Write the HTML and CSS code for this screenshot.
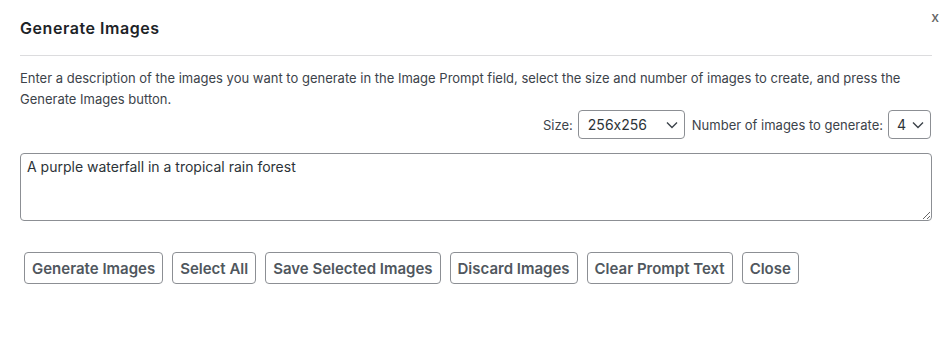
FILE: index.html
```html
<!DOCTYPE html>
<html lang="en">
<head>
  <meta charset="UTF-8" />
  <meta name="viewport" content="width=device-width, initial-scale=1.0" />
  <title>Generate Images</title>
  <link rel="stylesheet" href="styles.css">
</head>
<body>
  <div class="modal">
    <button class="close-x" type="button">x</button>
    <div class="modal-header">
      <h1>Generate Images</h1>
    </div>

    <p class="intro">Enter a description of the images you want to generate in the Image Prompt field, select the size and number of images to create, and press the Generate Images button.</p>

    <div class="options">
      <label for="size">Size:</label>
      <div class="select-wrap size-select">
        <select id="size">
          <option>256x256</option>
          <option>512x512</option>
          <option>1024x1024</option>
        </select>
        <svg class="chev" viewBox="0 0 12 8" width="12" height="8"><path d="M1 1.5l5 5 5-5" fill="none" stroke="#3c434a" stroke-width="1.4"/></svg>
      </div>
      <label for="count">Number of images to generate:</label>
      <div class="select-wrap count-select">
        <select id="count">
          <option>1</option>
          <option>2</option>
          <option>3</option>
          <option selected>4</option>
        </select>
        <svg class="chev" viewBox="0 0 12 8" width="12" height="8"><path d="M1 1.5l5 5 5-5" fill="none" stroke="#3c434a" stroke-width="1.4"/></svg>
      </div>
    </div>

    <textarea id="prompt" class="prompt">A purple waterfall in a tropical rain forest</textarea>

    <div class="actions">
      <button class="btn" type="button">Generate Images</button>
      <button class="btn" type="button">Select All</button>
      <button class="btn" type="button">Save Selected Images</button>
      <button class="btn" type="button">Discard Images</button>
      <button class="btn" type="button">Clear Prompt Text</button>
      <button class="btn" type="button">Close</button>
    </div>
  </div>
</body>
</html>
```

FILE: styles.css
```css
* { box-sizing: border-box; }
body {
  margin: 0;
  background: #fff;
  color: #1d2327;
  font-family: Inter, 'Noto Sans', sans-serif;
  font-feature-settings: "calt" 0;
}
select, textarea, button { font-feature-settings: "calt" 0; }
.modal {
  position: relative;
  padding: 0 18px 0 20px;
}
.close-x {
  position: absolute;
  top: 8px;
  right: 11px;
  background: none;
  border: none;
  padding: 0;
  font-family: Inter, sans-serif;
  font-size: 14px;
  font-weight: 500;
  color: #666;
  cursor: pointer;
}
.modal-header {
  border-bottom: 1px solid #dcdcde;
  height: 56px;
  padding-top: 18px;
}
.modal-header h1 {
  margin: 0;
  font-size: 16px;
  font-weight: 600;
  letter-spacing: 0.55px;
  line-height: 20px;
  color: #1d2327;
}
.intro {
  margin: 12px 0 0;
  font-size: 13px;
  line-height: 21px;
  color: #3c434a;
}
.options {
  display: flex;
  justify-content: flex-end;
  align-items: center;
  gap: 5px;
  margin-top: 0;
  padding-right: 1px;
  font-size: 13px;
  color: #3c434a;
}
.size-select { margin-right: 2px; }
.select-wrap {
  position: relative;
  height: 29px;
}
.select-wrap select {
  appearance: none;
  -webkit-appearance: none;
  height: 29px;
  border: 1px solid #8c8f94;
  border-radius: 4px;
  background: #fff;
  font-family: Inter, sans-serif;
  font-size: 14px;
  color: #2c3338;
  padding: 0 24px 0 8px;
}
.size-select select { width: 107px; padding-left: 9px; }
.count-select select { width: 43px; padding-left: 8px; }
.chev {
  position: absolute;
  right: 7px;
  top: 11px;
  pointer-events: none;
}
.prompt {
  display: block;
  width: 100%;
  height: 68px;
  margin-top: 14px;
  padding: 4px 6px;
  border: 1px solid #8c8f94;
  border-radius: 4px;
  font-family: Inter, sans-serif;
  font-size: 14px;
  line-height: 18px;
  color: #2c3338;
  resize: vertical;
}
.actions {
  display: flex;
  gap: 9px;
  margin-top: 31px;
  padding-left: 4px;
}
.btn {
  height: 32px;
  padding: 0 7px;
  border: 1px solid #8c8f94;
  border-radius: 4px;
  background: #fff;
  font-family: Inter, sans-serif;
  font-size: 15px;
  font-weight: 600;
  color: #50575e;
  cursor: pointer;
}
```
